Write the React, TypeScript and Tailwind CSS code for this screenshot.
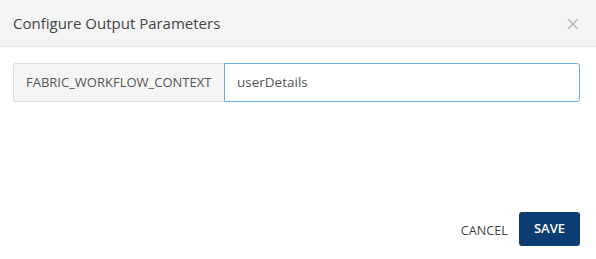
import { useState } from "react";

const App: React.FC = () => {
  const [value, setValue] = useState("userDetails");

  return (
    <div className="w-[596px] h-[259px] bg-white flex flex-col font-['Open_Sans',sans-serif] text-[#333]">
      {/* Header */}
      <div className="h-[47px] bg-[#f4f4f4] border-b border-[#e5e5e5] flex items-center justify-between pl-[13px] pr-[16px]">
        <h4 className="text-[15px] text-[#444] leading-none">Configure Output Parameters</h4>
        <button className="text-[#bbb] w-[13px] h-[13px] mt-[2px]">
          <svg viewBox="0 0 12 12" className="w-[12px] h-[12px]">
            <path d="M1 1L11 11M11 1L1 11" stroke="currentColor" strokeWidth="1.6" />
          </svg>
        </button>
      </div>

      {/* Body */}
      <div className="flex-1 px-[13px] pt-[16px]">
        <div className="flex h-[39px] w-[567px]">
          <span className="flex items-center px-[12px] w-[211px] bg-[#f5f5f5] border border-[#ddd] border-r-0 rounded-l-[3px] text-[13px] text-[#555]">
            FABRIC_WORKFLOW_CONTEXT
          </span>
          <input
            value={value}
            spellCheck
            onChange={(e) => setValue(e.target.value)}
            className="flex-1 border border-[#66afe9] rounded-r-[3px] px-[12px] text-[13.5px] text-[#555] outline-none"
          />
        </div>
      </div>

      {/* Footer */}
      <div className="flex items-center justify-end gap-[11px] pr-[16px] pb-[13px]">
        <button className="text-[12.7px] text-[#444] mt-[4px]">CANCEL</button>
        <button className="w-[61px] h-[34px] bg-[#0b3d73] text-white text-[13px] font-semibold rounded-[3px]">
          SAVE
        </button>
      </div>
    </div>
  );
};

export default App;
